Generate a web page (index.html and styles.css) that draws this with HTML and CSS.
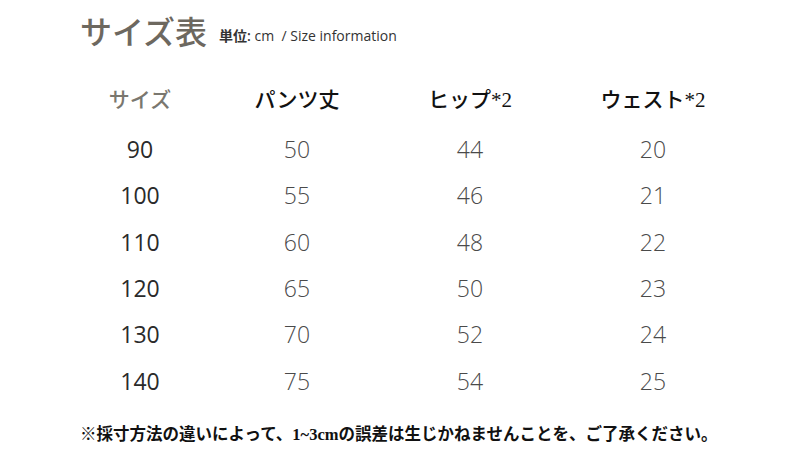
FILE: index.html
```html
<!DOCTYPE html>
<html lang="ja">
<head>
<meta charset="utf-8">
<link rel="stylesheet" href="styles.css">
</head>
<body>
<div class="page">
  <div class="title-row">
    <h1 class="title">サイズ表</h1>
    <span class="unit"><span class="unit-ja">単位:</span> cm &nbsp;/ Size information</span>
  </div>
  <div class="table">
    <div class="row head">
      <div class="cell first">サイズ</div>
      <div class="cell">パンツ丈</div>
      <div class="cell">ヒップ*2</div>
      <div class="cell">ウェスト*2</div>
    </div>
    <div class="row data"><div class="cell first">90</div><div class="cell">50</div><div class="cell">44</div><div class="cell">20</div></div>
    <div class="row data"><div class="cell first">100</div><div class="cell">55</div><div class="cell">46</div><div class="cell">21</div></div>
    <div class="row data"><div class="cell first">110</div><div class="cell">60</div><div class="cell">48</div><div class="cell">22</div></div>
    <div class="row data"><div class="cell first">120</div><div class="cell">65</div><div class="cell">50</div><div class="cell">23</div></div>
    <div class="row data"><div class="cell first">130</div><div class="cell">70</div><div class="cell">52</div><div class="cell">24</div></div>
    <div class="row data"><div class="cell first">140</div><div class="cell">75</div><div class="cell">54</div><div class="cell">25</div></div>
  </div>
  <p class="note">※採寸方法の違いによって、1~3cmの誤差は生じかねませんことを、ご了承ください。</p>
</div>
</body>
</html>
```

FILE: styles.css
```css
html, body {
  margin: 0;
  padding: 0;
  background: #ffffff;
}
.page {
  width: 800px;
  height: 475px;
  box-sizing: border-box;
  padding: 11px 0 0 0;
  font-family: "Liberation Serif", "Noto Sans CJK JP", serif;
}
.title-row {
  display: flex;
  align-items: center;
  padding-left: 80px;
  height: 38px;
}
.title {
  margin: 0;
  font-family: "Noto Sans CJK JP", serif;
  font-weight: 500;
  font-size: 32px;
  line-height: 38px;
  color: #6d685f;
  letter-spacing: 0;
}
.unit {
  margin-left: 12px;
  margin-top: 9px;
  font-family: "Open Sans", "Noto Sans CJK JP", sans-serif;
  font-size: 14px;
  color: #333333;
}
.unit-ja {
  font-weight: 600;
}
.table {
  margin-top: 26px;
  padding-left: 60px;
}
.row {
  display: grid;
  grid-template-columns: 160px 154px 192px 174px;
  align-items: center;
}
.row.head {
  height: 46px;
  margin-bottom: 5px;
}
.row.data {
  height: 46.3px;
}
.cell {
  text-align: center;
}
.head .cell {
  font-family: "Liberation Serif", "Noto Sans CJK JP", serif;
  font-size: 21px;
  font-weight: 500;
  color: #111111;
}
.head .cell.first {
  color: #7a776f;
}
.data .cell {
  font-family: "Open Sans", sans-serif;
  font-weight: 300;
  font-size: 23px;
  color: #4a4a4a;
}
.data .cell.first {
  font-weight: 400;
  color: #2a2a2a;
}
.note {
  margin: 17px 0 0 80px;
  font-family: "Liberation Serif", "Noto Sans CJK JP", serif;
  font-size: 16.5px;
  font-weight: 700;
  color: #111111;
  white-space: nowrap;
}
```
